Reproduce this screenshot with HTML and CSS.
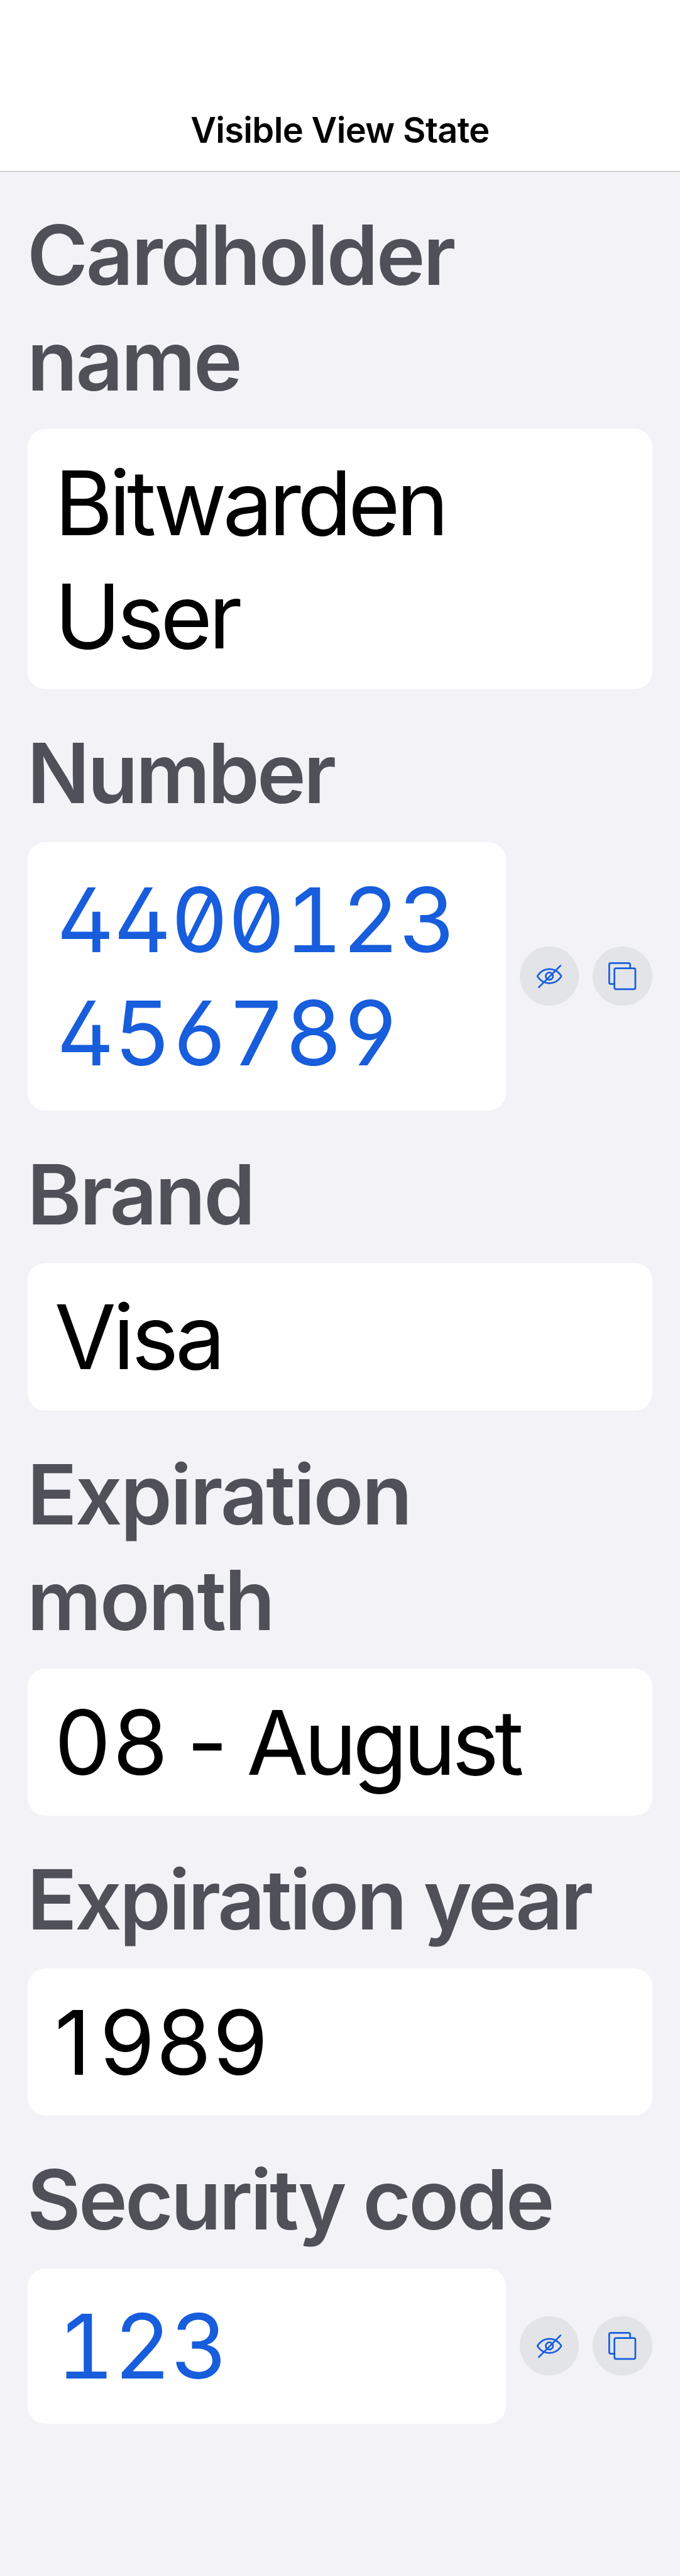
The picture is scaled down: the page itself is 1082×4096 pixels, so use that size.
FILE: index.html
```html
<!DOCTYPE html>
<html lang="en">
<head>
<meta charset="utf-8">
<title>Visible View State</title>
<link rel="stylesheet" href="styles.css">
</head>
<body>
<svg class="sprite" aria-hidden="true">
  <symbol id="eye-slash" viewBox="0 0 102 102">
    <path d="M31.4 49.3C41.6 35.3 60.4 35.3 70.6 49.3Q72 51 70.6 52.7C60.4 66.7 41.6 66.7 31.4 52.7Q30 51 31.4 49.3Z"/>
    <circle cx="51" cy="51" r="6.2"/>
    <path d="M32.8 70.2 70.2 32.8"/>
  </symbol>
  <symbol id="copy" viewBox="0 0 102 102">
    <rect x="37.5" y="37.5" width="36" height="36" rx="2.8"/>
    <path d="M64.5 36.5V31.3a2.8 2.8 0 0 0-2.8-2.8H31.3a2.8 2.8 0 0 0-2.8 2.8v30.4a2.8 2.8 0 0 0 2.8 2.8h5.2"/>
  </symbol>
</svg>
<header class="nav"><h1 class="nav-title">Visible View State</h1></header>
<main class="fields">
  <section class="field">
    <h2 class="label">Cardholder<br>name</h2>
    <div class="row"><p class="value name">Bitwarden<br>User</p></div>
  </section>
  <section class="field">
    <h2 class="label label-tight">Number</h2>
    <div class="row">
      <p class="value code">4400123<br>456789</p>
      <button class="action" aria-label="Hide number"><svg class="icon"><use href="#eye-slash"/></svg></button>
      <button class="action" aria-label="Copy number"><svg class="icon"><use href="#copy"/></svg></button>
    </div>
  </section>
  <section class="field">
    <h2 class="label">Brand</h2>
    <div class="row"><p class="value">Visa</p></div>
  </section>
  <section class="field">
    <h2 class="label label-loose">Expiration<br>month</h2>
    <div class="row"><p class="value"><span class="digit">0</span>8 - <span class="month">August</span></p></div>
  </section>
  <section class="field">
    <h2 class="label label-tight">Expiration year</h2>
    <div class="row"><p class="value year"><span class="one">1</span>989</p></div>
  </section>
  <section class="field">
    <h2 class="label label-tight">Security code</h2>
    <div class="row">
      <p class="value code">123</p>
      <button class="action" aria-label="Hide security code"><svg class="icon"><use href="#eye-slash"/></svg></button>
      <button class="action" aria-label="Copy security code"><svg class="icon"><use href="#copy"/></svg></button>
    </div>
  </section>
</main>
</body>
</html>
```
FILE: styles.css
```css
* { box-sizing: border-box; margin: 0; }
body {
  background: #f2f2f7;
  font-family: Inter, "Liberation Sans", sans-serif;
  height: 4096px;
  overflow: hidden;
}
.sprite { display: none; }
.nav {
  height: 273px;
  padding-top: 172px;
  background: #fff;
  border-bottom: 1px solid #acacae;
  text-align: center;
}
.nav-title {
  font-size: 56px;
  line-height: 70px;
  font-weight: 600;
  letter-spacing: -0.65px;
  color: #000;
}
.fields { padding: 0 44.4px; }
.field { padding-top: 50.3px; }
.field:first-child { padding-top: 49.3px; }
.label {
  margin: 0 0 24.6px -1.3px;
  font-size: 131.6px;
  line-height: 167.8px;
  font-weight: 600;
  letter-spacing: -3.2px;
  color: #505058;
  white-space: nowrap;
}
.label-tight { letter-spacing: -3.8px; }
.label-loose { letter-spacing: -2.9px; }
.row { display: flex; align-items: center; gap: 22.2px; }
.value {
  flex: 1;
  padding: 28px 42.4px 26.6px;
  border-radius: 28px;
  background: #fff;
  color: #000;
  font-size: 142px;
  line-height: 179.5px;
  letter-spacing: -5px;
  white-space: nowrap;
}
.name { letter-spacing: -6.1px; }
.digit { letter-spacing: 3px; }
.month { letter-spacing: -6.6px; }
.year { letter-spacing: 2px; }
.one { letter-spacing: 14px; }
.code {
  padding: 34.7px 45.6px 33.3px;
  color: #175ddc;
  letter-spacing: -1.34px;
  font-feature-settings: "tnum", "zero", "cv02", "cv03", "cv04";
}
.action {
  width: 94.3px;
  height: 94.3px;
  padding: 0;
  border: 0;
  border-radius: 50%;
  background: #e2e4e8;
}
.icon {
  display: block;
  width: 100%;
  height: 100%;
  fill: none;
  stroke: #175ddc;
  stroke-width: 2.9;
  stroke-linecap: round;
  stroke-linejoin: round;
}
```
